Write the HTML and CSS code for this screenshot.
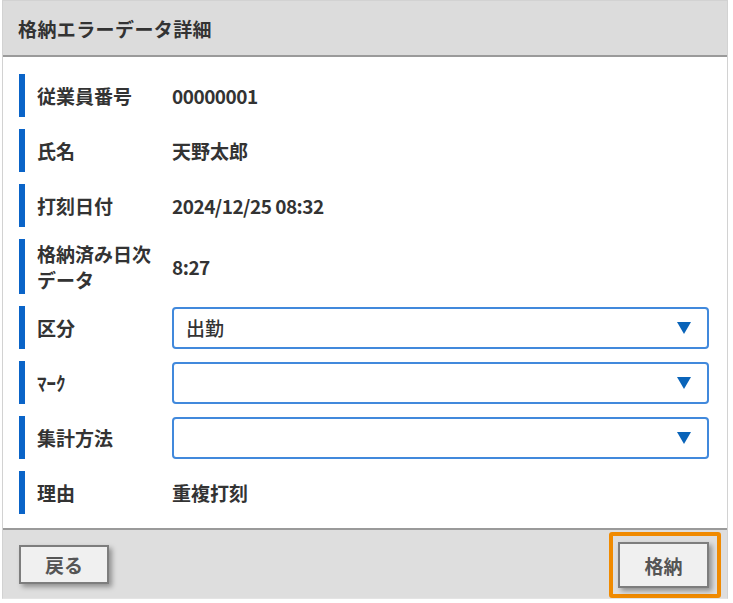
FILE: index.html
```html
<!DOCTYPE html>
<html lang="ja">
<head>
<meta charset="utf-8">
<title>格納エラーデータ詳細</title>
<link rel="stylesheet" href="styles.css">
</head>
<body>
<div class="dialog">
  <div class="header">格納エラーデータ詳細</div>
  <div class="body">
    <div class="row"><div class="label">従業員番号</div><div class="value num">00000001</div></div>
    <div class="row"><div class="label">氏名</div><div class="value">天野太郎</div></div>
    <div class="row"><div class="label">打刻日付</div><div class="value num">2024/12/25 08:32</div></div>
    <div class="row tall"><div class="label">格納済み日次データ</div><div class="value num">8:27</div></div>
    <div class="row"><div class="label">区分</div>
      <div class="select"><span class="select-text">出勤</span>
        <svg class="arrow" viewBox="0 0 14 12" width="14" height="12"><polygon points="0,0 14,0 7,12" fill="#0a64b9"/></svg>
      </div>
    </div>
    <div class="row"><div class="label">ﾏｰｸ</div>
      <div class="select"><span class="select-text"></span>
        <svg class="arrow" viewBox="0 0 14 12" width="14" height="12"><polygon points="0,0 14,0 7,12" fill="#0a64b9"/></svg>
      </div>
    </div>
    <div class="row"><div class="label">集計方法</div>
      <div class="select"><span class="select-text"></span>
        <svg class="arrow" viewBox="0 0 14 12" width="14" height="12"><polygon points="0,0 14,0 7,12" fill="#0a64b9"/></svg>
      </div>
    </div>
    <div class="row"><div class="label">理由</div><div class="value">重複打刻</div></div>
  </div>
  <div class="footer">
    <button class="btn">戻る</button>
    <div class="highlight"><button class="btn btn-tall">格納</button></div>
  </div>
</div>
</body>
</html>
```

FILE: styles.css
```css
html, body {
  margin: 0;
  padding: 0;
  background: #ffffff;
}
body {
  font-family: "Noto Sans CJK JP", "Noto Sans", sans-serif;
  color: #333333;
}
.dialog {
  margin-left: 2px;
  width: 724px;
  border: 1px solid #d2d2d2;
  border-bottom: 1px solid #e4e4e4;
}
.header {
  height: 54px;
  background: #dcdcdc;
  border-bottom: 2px solid #9a9a9a;
  display: flex;
  align-items: center;
  padding-left: 15px;
  font-size: 19px;
  font-weight: bold;
  letter-spacing: 0.4px;
  color: #333;
}
.body {
  background: #fff;
  padding: 17px 18px 14px 16px;
  display: flex;
  flex-direction: column;
  gap: 12px;
}
.row {
  display: flex;
  align-items: center;
  height: 43px;
  border-left: 6px solid #0a64c8;
}
.row.tall {
  height: 55px;
}
.label {
  width: 124px;
  padding-left: 12px;
  margin-right: 11px;
  font-size: 19px;
  font-weight: bold;
  line-height: 26px;
}
.value {
  font-size: 19px;
  font-weight: bold;
}
.value.num {
  letter-spacing: -0.5px;
}
.select {
  flex: 1;
  height: 42px;
  box-sizing: border-box;
  border: 2px solid #4189dc;
  border-radius: 4px;
  display: flex;
  align-items: center;
  justify-content: space-between;
  padding: 0 16px 0 12px;
}
.select-text {
  font-size: 19px;
  font-weight: 500;
  color: #333;
}
.arrow {
  display: block;
}
.footer {
  border-top: 2px solid #9a9a9a;
  background: #dedede;
  height: 68px;
  display: flex;
  align-items: center;
  justify-content: space-between;
  padding: 0 6px 0 16px;
}
.btn {
  font-family: "Noto Sans CJK JP", sans-serif;
  font-size: 19px;
  font-weight: bold;
  color: #555;
  background: #f0f0f0;
  border: 2px solid #7d7d7d;
  width: 90px;
  height: 39px;
  box-shadow: 3px 3px 5px rgba(0, 0, 0, 0.35);
  padding: 0;
}
.btn-tall {
  width: 91px;
  height: 46px;
}
.highlight {
  border: 4px solid #f08a00;
  border-radius: 3px;
  padding: 6px 8px 6px 5px;
  margin-top: 2px;
}
```
